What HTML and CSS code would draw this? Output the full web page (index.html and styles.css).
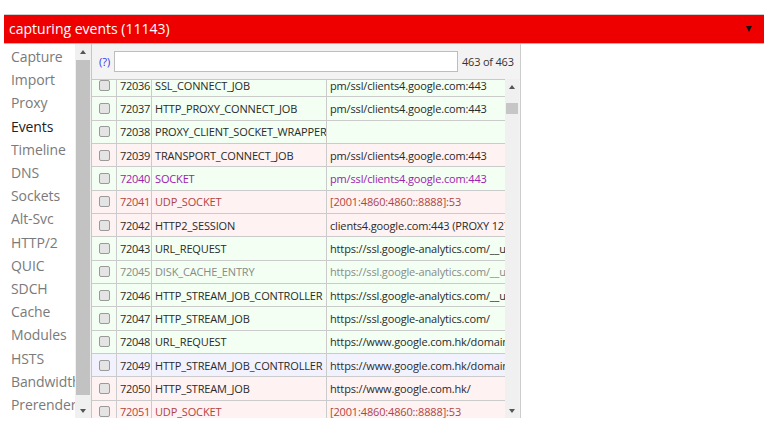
FILE: index.html
```html
<!DOCTYPE html>
<html>
<head>
<meta charset="utf-8">
<link rel="stylesheet" href="styles.css">
</head>
<body>
<div class="page">
  <div class="topbar">
    <span class="title">capturing events (11143)</span>
    <span class="menu-arrow"></span>
  </div>
  <div class="main">
    <div class="sidebar">
      <ul class="nav">
        <li>Capture</li>
        <li>Import</li>
        <li>Proxy</li>
        <li class="active">Events</li>
        <li>Timeline</li>
        <li>DNS</li>
        <li>Sockets</li>
        <li>Alt-Svc</li>
        <li>HTTP/2</li>
        <li>QUIC</li>
        <li>SDCH</li>
        <li>Cache</li>
        <li>Modules</li>
        <li>HSTS</li>
        <li>Bandwidth</li>
        <li>Prerender</li>
      </ul>
      <div class="sbar nav-sbar">
        <span class="arr up"></span>
        <span class="thumb nav-thumb"></span>
        <span class="arr down"></span>
      </div>
    </div>
    <div class="panel">
      <div class="search">
        <span class="help">(?)</span>
        <span class="input"></span>
        <span class="count">463 of 463</span>
      </div>
      <div class="tablewrap">
        <div class="viewport">
          <div class="rows">
            <div class="row green"><span class="cb"><i></i></span><span class="id">72036</span><span class="type">SSL_CONNECT_JOB</span><span class="src">pm/ssl/clients4.google.com:443</span></div>
            <div class="row green"><span class="cb"><i></i></span><span class="id">72037</span><span class="type">HTTP_PROXY_CONNECT_JOB</span><span class="src">pm/ssl/clients4.google.com:443</span></div>
            <div class="row green"><span class="cb"><i></i></span><span class="id">72038</span><span class="type">PROXY_CLIENT_SOCKET_WRAPPER</span><span class="src"></span></div>
            <div class="row pink"><span class="cb"><i></i></span><span class="id">72039</span><span class="type">TRANSPORT_CONNECT_JOB</span><span class="src">pm/ssl/clients4.google.com:443</span></div>
            <div class="row green purple"><span class="cb"><i></i></span><span class="id">72040</span><span class="type">SOCKET</span><span class="src">pm/ssl/clients4.google.com:443</span></div>
            <div class="row pink red"><span class="cb"><i></i></span><span class="id">72041</span><span class="type">UDP_SOCKET</span><span class="src">[2001:4860:4860::8888]:53</span></div>
            <div class="row pink"><span class="cb"><i></i></span><span class="id">72042</span><span class="type">HTTP2_SESSION</span><span class="src">clients4.google.com:443 (PROXY 127.0.0.1:8087)</span></div>
            <div class="row green"><span class="cb"><i></i></span><span class="id">72043</span><span class="type">URL_REQUEST</span><span class="src">https://ssl.google-analytics.com/__utm.gif</span></div>
            <div class="row green grey"><span class="cb"><i></i></span><span class="id">72045</span><span class="type">DISK_CACHE_ENTRY</span><span class="src">https://ssl.google-analytics.com/__utm.gif</span></div>
            <div class="row green"><span class="cb"><i></i></span><span class="id">72046</span><span class="type">HTTP_STREAM_JOB_CONTROLLER</span><span class="src">https://ssl.google-analytics.com/__utm.gif</span></div>
            <div class="row green"><span class="cb"><i></i></span><span class="id">72047</span><span class="type">HTTP_STREAM_JOB</span><span class="src">https://ssl.google-analytics.com/</span></div>
            <div class="row green"><span class="cb"><i></i></span><span class="id">72048</span><span class="type">URL_REQUEST</span><span class="src">https://www.google.com.hk/domains</span></div>
            <div class="row blue"><span class="cb"><i></i></span><span class="id">72049</span><span class="type">HTTP_STREAM_JOB_CONTROLLER</span><span class="src">https://www.google.com.hk/domains</span></div>
            <div class="row pink"><span class="cb"><i></i></span><span class="id">72050</span><span class="type">HTTP_STREAM_JOB</span><span class="src">https://www.google.com.hk/</span></div>
            <div class="row pink red"><span class="cb"><i></i></span><span class="id">72051</span><span class="type">UDP_SOCKET</span><span class="src">[2001:4860:4860::8888]:53</span></div>
          </div>
        </div>
        <div class="sbar table-sbar">
          <span class="arr up"></span>
          <span class="thumb table-thumb"></span>
          <span class="arr down"></span>
        </div>
      </div>
    </div>
  </div>
</div>
</body>
</html>
```

FILE: styles.css
```css
* { box-sizing: border-box; }
html, body { margin: 0; padding: 0; background: #fff; }
body { font-family: "Open Sans", "Noto Sans", sans-serif; color: #333; }

.page { padding: 14px 13px 0 4px; width: 777px; }

.topbar {
  height: 30px;
  background: #ee0000;
  border-top: 1px solid #cfcfcf;
  border-bottom: 1px solid #b8b8b8;
  display: flex;
  align-items: center;
  justify-content: space-between;
  padding: 0 12px 0 5px;
}
.title { color: #fff; font-size: 14px; line-height: 20px; }
.menu-arrow {
  width: 0; height: 0;
  border-left: 3px solid transparent;
  border-right: 3px solid transparent;
  border-top: 6px solid #111;
}

.main { display: flex; height: 374px; }

.sidebar { display: flex; width: 88px; border-right: 1px solid #c6c6c6; }
.nav {
  list-style: none; margin: 0; padding: 1px 0 0 7px;
  width: 72px; overflow: hidden; white-space: nowrap;
}
.nav li { font-size: 14px; line-height: 23.2px; color: #7a7a7a; letter-spacing: -0.1px; }
.nav li.active { color: #222; }

.sbar {
  width: 15px; background: #f0f0f0;
  display: flex; flex-direction: column; align-items: center;
}
.arr { width: 0; height: 0; border-left: 3.5px solid transparent; border-right: 3.5px solid transparent; }
.arr.up { border-bottom: 4px solid #555; }
.arr.down { border-top: 4px solid #555; }
.nav-sbar { padding: 6px 0 0; width: 16px; }
.nav-thumb { width: 14px; height: 335px; background: #c2c2c2; margin: 6px 0 14px; }

.panel {
  width: 429px;
  background: #f3f3f3;
  border-right: 1px solid #cdcdcd;
  display: flex; flex-direction: column;
}
.search { height: 35px; display: flex; align-items: center; padding: 0 0 0 7px; flex: none; white-space: nowrap; }
.help { color: #3333ee; font-size: 11px; width: 15px; }
.input { width: 344px; height: 21px; background: #fff; border: 1px solid #bdbdbd; margin-left: 0; }
.count { font-size: 11px; color: #333; margin-left: 4px; letter-spacing: -0.2px; }

.tablewrap { display: flex; flex: 1; overflow: hidden; }
.viewport { width: 413px; overflow: hidden; border-top: 1px solid #c8c8c8; }
.rows { margin-top: -6px; }
.row {
  display: flex; height: 23.33px; border-bottom: 1.5px solid #cbcbcb;
  font-size: 11px; white-space: nowrap; color: #2a2a2a;
}
.row span { display: flex; align-items: center; overflow: hidden; border-right: 1.5px solid #cbcbcb; padding-left: 3px; letter-spacing: -0.15px; }
.row .cb { width: 25px; padding-left: 7px; }
.row .cb i { display: block; width: 11px; height: 11px; border: 1px solid #9a9a9a; border-radius: 2px; background: #e4e4e4; }
.row .id { width: 35px; letter-spacing: -0.3px; }
.row .type { width: 175px; }
.row .src { width: 178px; border-right: none; }

.green { background: #f2fff2; }
.pink { background: #fff2f2; }
.blue { background: #f2f2ff; }
.purple { color: #a020b0; }
.red { color: #b04444; }
.grey { color: #8a8a8a; }

.table-sbar { width: 14px; padding: 6px 0 0; }
.table-thumb { width: 12px; height: 11px; background: #c6c6c6; margin: 14px 0 auto; }
.table-sbar .arr.down { margin-bottom: 5px; }
```
